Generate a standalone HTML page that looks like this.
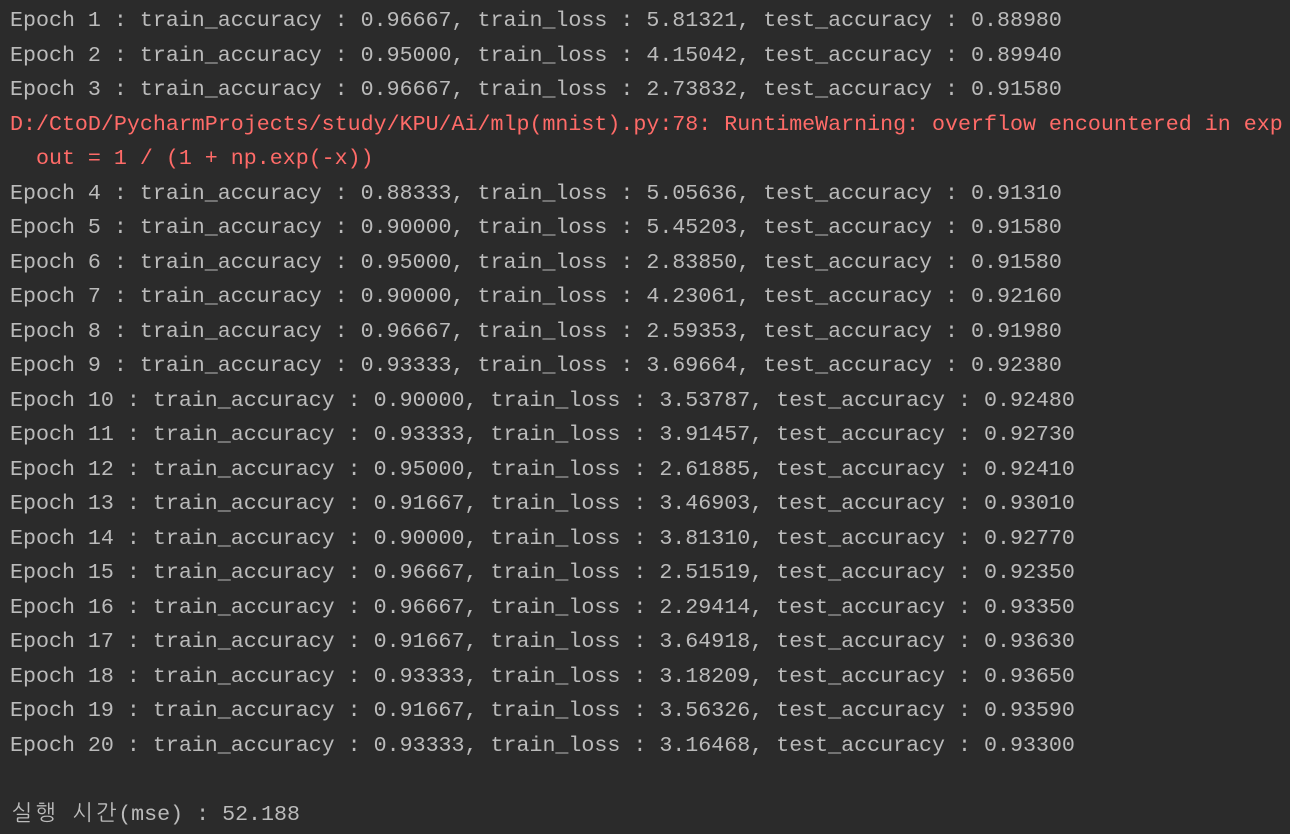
<!DOCTYPE html>
<html><head><meta charset="utf-8"><style>
html,body{margin:0;padding:0;background:#2b2b2b;width:1290px;height:834px;overflow:hidden}
pre{margin:0;padding:4px 0 0 10px;font-family:"Liberation Mono","NanumGothic",monospace;font-size:21.65px;line-height:34.52px;color:#bbbbbb;white-space:pre}
.r{color:#ff6b68}
.k{display:inline-block;width:23.8px;text-align:center}
</style></head><body><pre>Epoch 1 : train_accuracy : 0.96667, train_loss : 5.81321, test_accuracy : 0.88980
Epoch 2 : train_accuracy : 0.95000, train_loss : 4.15042, test_accuracy : 0.89940
Epoch 3 : train_accuracy : 0.96667, train_loss : 2.73832, test_accuracy : 0.91580
<span class="r">D:/CtoD/PycharmProjects/study/KPU/Ai/mlp(mnist).py:78: RuntimeWarning: overflow encountered in exp
  out = 1 / (1 + np.exp(-x))</span>
Epoch 4 : train_accuracy : 0.88333, train_loss : 5.05636, test_accuracy : 0.91310
Epoch 5 : train_accuracy : 0.90000, train_loss : 5.45203, test_accuracy : 0.91580
Epoch 6 : train_accuracy : 0.95000, train_loss : 2.83850, test_accuracy : 0.91580
Epoch 7 : train_accuracy : 0.90000, train_loss : 4.23061, test_accuracy : 0.92160
Epoch 8 : train_accuracy : 0.96667, train_loss : 2.59353, test_accuracy : 0.91980
Epoch 9 : train_accuracy : 0.93333, train_loss : 3.69664, test_accuracy : 0.92380
Epoch 10 : train_accuracy : 0.90000, train_loss : 3.53787, test_accuracy : 0.92480
Epoch 11 : train_accuracy : 0.93333, train_loss : 3.91457, test_accuracy : 0.92730
Epoch 12 : train_accuracy : 0.95000, train_loss : 2.61885, test_accuracy : 0.92410
Epoch 13 : train_accuracy : 0.91667, train_loss : 3.46903, test_accuracy : 0.93010
Epoch 14 : train_accuracy : 0.90000, train_loss : 3.81310, test_accuracy : 0.92770
Epoch 15 : train_accuracy : 0.96667, train_loss : 2.51519, test_accuracy : 0.92350
Epoch 16 : train_accuracy : 0.96667, train_loss : 2.29414, test_accuracy : 0.93350
Epoch 17 : train_accuracy : 0.91667, train_loss : 3.64918, test_accuracy : 0.93630
Epoch 18 : train_accuracy : 0.93333, train_loss : 3.18209, test_accuracy : 0.93650
Epoch 19 : train_accuracy : 0.91667, train_loss : 3.56326, test_accuracy : 0.93590
Epoch 20 : train_accuracy : 0.93333, train_loss : 3.16468, test_accuracy : 0.93300

<span class="k">실</span><span class="k">행</span> <span class="k">시</span><span class="k">간</span>(mse) : 52.188</pre></body></html>
